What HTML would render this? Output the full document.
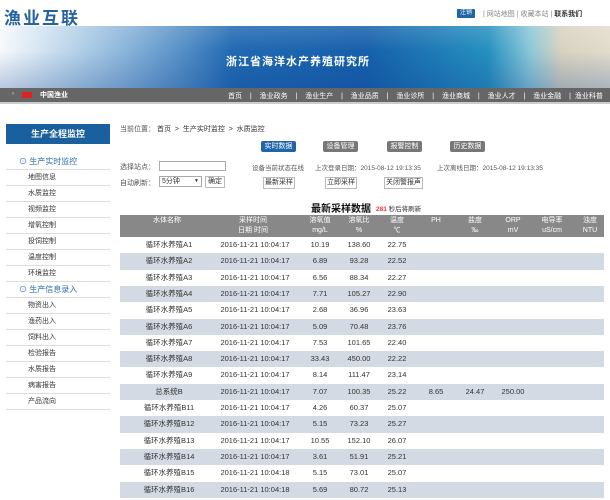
<!DOCTYPE html><html><head><meta charset="utf-8"><style>
*{margin:0;padding:0;box-sizing:border-box}
body{width:610px;height:500px;overflow:hidden;background:#fff;font-family:"Liberation Sans","Noto Sans CJK SC",sans-serif;font-size:7px;color:#333;position:relative}
.a{position:absolute;white-space:nowrap}
.btn{position:absolute;height:11px;line-height:11px;font-size:7px;color:#fff;text-align:center;border-radius:2px;background:#777}
.wb{position:absolute;height:12px;line-height:10px;font-size:7px;border:1px solid #bbb;background:#fff;text-align:center}
.side div{height:16px;line-height:15px;padding-left:22px;font-size:7px;border-bottom:1px solid #ddd;color:#333}
.side div.h{color:#2a6fb0;font-size:8px;padding-left:13px}
.row{position:absolute;left:120px;width:484px;height:16.3px}
.row span{position:absolute;width:110px;margin-left:-55px;text-align:center;line-height:16px;font-size:7.5px;color:#333}
.hd span{color:#fff;line-height:10px;font-size:7px}
</style></head><body>
<div class="a" style="left:4px;top:4px;font-size:17px;font-weight:bold;color:#2563a0;letter-spacing:2px">漁业互联</div>
<div class="a" style="left:457px;top:9px;width:18px;height:9px;background:#2065a8;color:#fff;font-size:6px;text-align:center;line-height:9px;border-radius:1px">注销</div>
<div class="a" style="left:483px;top:9px;font-size:7px;color:#888">| 网站地图 | 收藏本站 | <b style="color:#333">联系我们</b></div>
<div class="a" style="left:0;top:26px;width:610px;height:62px;background:linear-gradient(90deg,rgba(255,255,255,.95) 0%,rgba(220,235,245,.7) 14%,rgba(60,130,200,0) 38%),linear-gradient(90deg,#4b8fc8 0%,#1f68b2 40%,#1660ab 60%,#2590c0 80%,#8cc8d8 87%,#d8d2c0 92%,#e2dccc 100%)"></div>
<div class="a" style="left:0;top:26px;width:610px;height:62px;background:linear-gradient(180deg,rgba(255,255,255,.15),rgba(0,0,0,0) 40%,rgba(10,60,140,.25))"></div>
<div class="a" style="left:226px;top:53px;font-size:11px;font-weight:bold;color:#fff;letter-spacing:1px">浙江省海洋水产养殖研究所</div>
<div class="a" style="left:0;top:88px;width:610px;height:14px;background:#666"></div>
<div class="a" style="left:0;top:102px;width:610px;height:2px;background:#ccc"></div>
<div class="a" style="left:12px;top:91px;color:#ddd;font-size:6px">›</div>
<div class="a" style="left:22px;top:92px;width:10px;height:6px;background:#d22"></div>
<div class="a" style="left:40px;top:90px;color:#fff;font-size:7px;font-weight:bold">中国渔业</div>
<div class="a" style="left:228px;top:91px;color:#fff;font-size:7px;word-spacing:2px">首页 &nbsp;| &nbsp;渔业政务 &nbsp;| &nbsp;渔业生产 &nbsp;| &nbsp;渔业品质 &nbsp;| &nbsp;渔业诊所 &nbsp;| &nbsp;渔业商城 &nbsp;| &nbsp;渔业人才 &nbsp;| &nbsp;渔业金融 &nbsp;| 渔业科普</div>
<div class="a" style="left:6px;top:124px;width:104px;height:20px;background:#1a5f9e;color:#fff;font-size:9px;font-weight:bold;text-align:center;line-height:20px">生产全程监控</div>
<div class="a side" style="left:6px;top:154px;width:104px">
<div class="h">⊙ 生产实时监控</div><div>地图信息</div><div>水质监控</div><div>视频监控</div><div>增氧控制</div><div>投饲控制</div><div>温度控制</div><div>环境监控</div>
<div class="h">⊙ 生产信息录入</div><div>物资出入</div><div>渔药出入</div><div>饲料出入</div><div>检验报告</div><div>水质报告</div><div>病害报告</div><div>产品流向</div></div>
<div class="a" style="left:120px;top:124px;color:#555">当前位置： <span style="color:#333">首页 &nbsp;&gt;&nbsp; 生产实时监控 &nbsp;&gt;&nbsp; 水质监控</span></div>
<div class="btn" style="left:261px;top:141px;width:35px;background:#2065a8">实时数据</div>
<div class="btn" style="left:323px;top:141px;width:35px">设备管理</div>
<div class="btn" style="left:387px;top:141px;width:35px">报警控制</div>
<div class="btn" style="left:450px;top:141px;width:35px">历史数据</div>
<div class="a" style="left:120px;top:162px;color:#555">选择站点：</div>
<div class="a" style="left:159px;top:161px;width:67px;height:10px;border:1px solid #aaa"></div>
<div class="a" style="left:252px;top:162px;color:#555;font-size:6.5px">设备当前状态在线</div>
<div class="a" style="left:315px;top:162px;color:#555;font-size:6.5px">上次登录日期：2015-08-12 19:13:35</div>
<div class="a" style="left:437px;top:162px;color:#555;font-size:6.5px">上次离线日期：2015-08-12 19:13:35</div>
<div class="a" style="left:120px;top:178px;color:#555">自动刷新：</div>
<div class="a" style="left:159px;top:176px;width:43px;height:11px;border:1px solid #aaa;padding-left:2px;line-height:9px">5分钟 <span style="float:right;font-size:5px;padding-right:2px">▼</span></div>
<div class="wb" style="left:205px;top:176px;width:20px">确定</div>
<div class="wb" style="left:263px;top:177px;width:32px">最新采样</div>
<div class="wb" style="left:325px;top:177px;width:32px">立即采样</div>
<div class="wb" style="left:384px;top:177px;width:39px">关闭警报声</div>
<div class="a" style="left:311px;top:200px;font-size:10px;font-weight:bold;color:#111">最新采样数据</div>
<div class="a" style="left:376px;top:203px;font-size:6.5px"><b style="color:#e33">281</b> 秒后将刷新</div>
<div class="row hd" style="top:215px;height:22px;background:#888">
<span style="left:47px;top:1px">水体名称</span><span style="left:133px;top:1px">采样时间<br>日期 时间</span><span style="left:200px;top:1px">溶氧值<br>mg/L</span><span style="left:239px;top:1px">溶氧比<br>%</span><span style="left:277px;top:1px">温度<br>℃</span><span style="left:316px;top:1px">PH</span><span style="left:355px;top:1px">盐度<br>‰</span><span style="left:393px;top:1px">ORP<br>mV</span><span style="left:432px;top:1px">电导率<br>uS/cm</span><span style="left:470px;top:1px">浊度<br>NTU</span></div>
<div id="t"></div>
<script>
var d=[["循环水养殖A1","10.19","138.60","22.75"],["循环水养殖A2","6.89","93.28","22.52"],["循环水养殖A3","6.56","88.34","22.27"],["循环水养殖A4","7.71","105.27","22.90"],["循环水养殖A5","2.68","36.96","23.63"],["循环水养殖A6","5.09","70.48","23.76"],["循环水养殖A7","7.53","101.65","22.40"],["循环水养殖A8","33.43","450.00","22.22"],["循环水养殖A9","8.14","111.47","23.14"],["总系统B","7.07","100.35","25.22","8.65","24.47","250.00"],["循环水养殖B11","4.26","60.37","25.07"],["循环水养殖B12","5.15","73.23","25.27"],["循环水养殖B13","10.55","152.10","26.07"],["循环水养殖B14","3.61","51.91","25.21"],["循环水养殖B15","5.15","73.01","25.07"],["循环水养殖B16","5.69","80.72","25.13"]];
var h="";d.forEach(function(r,i){var t=i<14?"2016-11-21 10:04:17":"2016-11-21 10:04:18";
h+='<div class="row" style="top:'+(237+i*16.3)+'px;background:'+(i%2?'#d3dae3':'#fff')+'"><span style="left:49px">'+r[0]+'</span><span style="left:135px">'+t+'</span><span style="left:200px">'+r[1]+'</span><span style="left:239px">'+r[2]+'</span><span style="left:277px">'+r[3]+'</span>'+(r[4]?'<span style="left:316px">'+r[4]+'</span><span style="left:355px">'+r[5]+'</span><span style="left:393px">'+r[6]+'</span>':'')+'</div>';});
document.getElementById("t").innerHTML=h;
</script>
</body></html>
